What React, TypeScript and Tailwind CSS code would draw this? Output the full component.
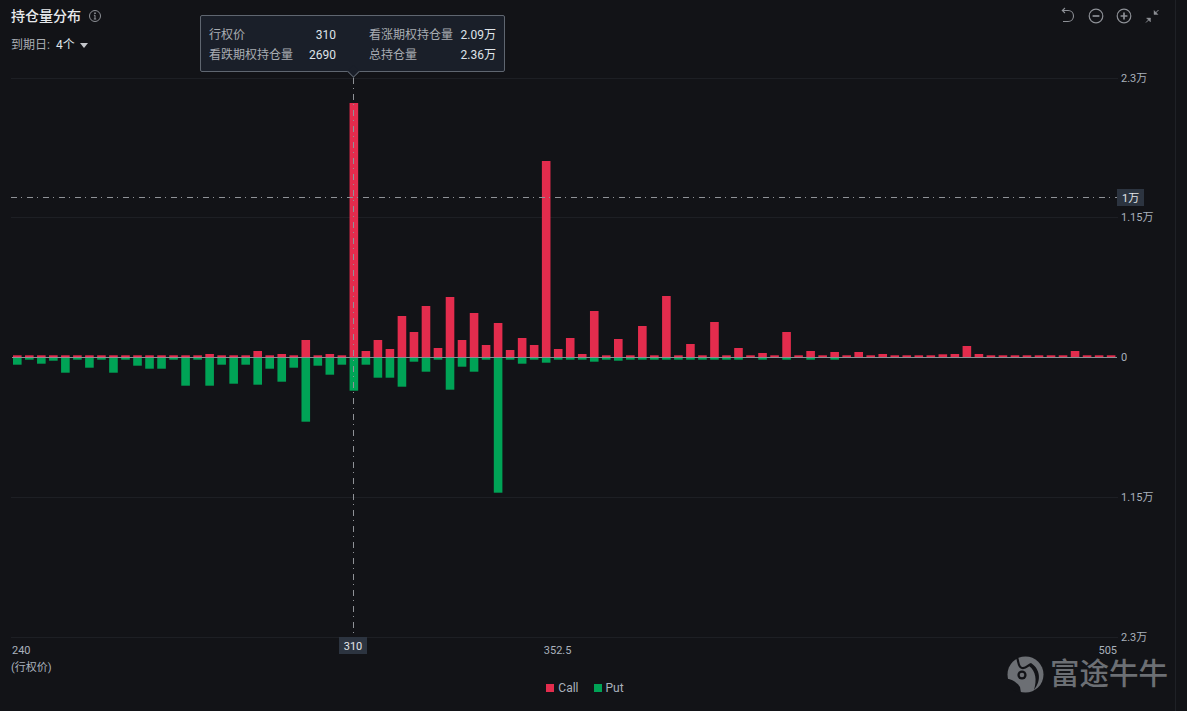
const calls = [
  1.7, 1.7, 1.7, 1.7, 1.7, 1.7, 1.7, 1.7, 1.7, 1.7, 1.7, 1.7, 1.7, 1.7, 1.7, 1.7, 3, 1.7, 1.7, 1.7, 6, 1.7, 3, 1.7,
  17, 1.7, 3, 1.7, 254, 6, 17, 8, 41, 25, 51, 9, 60, 17, 44, 12, 34, 7, 19, 12, 196, 8, 19, 3,
  46, 1.7, 18, 1.7, 31, 1.7, 61, 1.7, 13, 1.7, 35, 1.7, 9, 1.7, 4, 1.7, 25, 1.7, 6, 1.7, 5, 1.7, 5, 1.7,
  3, 1.7, 1.7, 1.7, 1.7, 2.7, 3, 11, 3, 1.7, 1.7, 1.7, 1.7, 1.7, 1.7, 1.7, 6, 1.7, 1.7, 1.7,
]

const puts = [
  7, 2, 6, 3, 15, 2, 10, 2, 15, 2, 8, 11, 11, 2, 28, 2, 28, 7, 26, 7, 27, 11, 24, 10,
  64, 8, 17, 7, 33, 7, 20, 20, 29, 4, 14, 2, 32, 9, 14, 2, 135, 2, 6, 2, 5, 2, 2, 2,
  4, 2, 3, 2, 2, 2, 2, 2, 2, 2, 2, 2, 2, 0, 2, 0, 2, 0, 2, 0, 2, 0, 0, 0,
  0, 0, 0, 0, 0, 0, 0, 0, 0, 0, 0, 0, 0, 0, 0, 0, 0, 0, 0, 0,
]

const grid = [78, 217, 497, 637]
const yLabels = [
  { y: 82, text: '2.3万' },
  { y: 221, text: '1.15万' },
  { y: 361, text: '0' },
  { y: 501, text: '1.15万' },
  { y: 641, text: '2.3万' },
]

function Chart() {
  return (
    <svg width="1175" height="619" viewBox="0 60 1175 619" className="block">
      {grid.map(y => (
        <rect key={y} x="11" y={y} width="1107" height="1" fill="#1d1f24" />
      ))}

      {calls.map((h, i) => (
        <rect key={i} x={13 + i * 12.02} y={357 - h} width="8.6" height={h} fill="#e32c4d" />
      ))}
      {puts.map((h, i) =>
        h > 0 ? <rect key={i} x={13 + i * 12.02} y="358" width="8.6" height={h - 0.3} fill="#00a356" /> : null,
      )}
      <rect x="12" y="357" width="1105" height="1" fill="#8b8e94" />

      <line x1="11" y1="197.5" x2="1117" y2="197.5" stroke="#8f9297" strokeDasharray="6 4 1 5" />
      <line x1="353.5" y1="78" x2="353.5" y2="637" stroke="#8f9297" strokeDasharray="6 4 1 5" />

      {yLabels.map(l => (
        <text key={l.y} x="1121" y={l.y} fontSize="11" fill="#a9b1bc">
          {l.text}
        </text>
      ))}

      <rect x="1117" y="189" width="27" height="17" fill="#2c3440" />
      <text x="1122" y="202" fontSize="11" fill="#e2e5e9">
        1万
      </text>

      <rect x="339" y="637" width="28" height="17" fill="#2c3440" />
      <text x="353" y="650" fontSize="11" fill="#e2e5e9" textAnchor="middle">
        310
      </text>

      <text x="12" y="654" fontSize="11" fill="#a9b1bc">
        240
      </text>
      <text x="11" y="671" fontSize="11" fill="#a9b1bc">
        (行权价)
      </text>
      <text x="557.6" y="654" fontSize="11" fill="#a9b1bc" textAnchor="middle">
        352.5
      </text>
      <text x="1117" y="654" fontSize="11" fill="#a9b1bc" textAnchor="end">
        505
      </text>
    </svg>
  )
}

function Tooltip() {
  return (
    <div className="absolute left-[200px] top-[15px] w-[305px] h-[57px] rounded-[2px] border border-[#5f6670] bg-[#1a1f29] px-[8px] text-[12px] leading-[20px] text-[#a9adb3]">
      <div className="grid grid-cols-[127px_160px] mt-[9px]">
        <div className="flex justify-between">
          <span>行权价</span>
          <span className="text-[#dfe3e8]">310</span>
        </div>
        <div className="flex justify-between pl-[33px]">
          <span>看涨期权持仓量</span>
          <span className="text-[#dfe3e8]">2.09万</span>
        </div>
        <div className="flex justify-between">
          <span>看跌期权持仓量</span>
          <span className="text-[#dfe3e8]">2690</span>
        </div>
        <div className="flex justify-between pl-[33px]">
          <span>总持仓量</span>
          <span className="text-[#dfe3e8]">2.36万</span>
        </div>
      </div>
      <div className="absolute left-[148px] top-[51px] w-[9px] h-[9px] rotate-45 border-r border-b border-[#5f6670] bg-[#1a1f29]" />
    </div>
  )
}

function Toolbar() {
  return (
    <div className="flex items-center gap-[8px] mr-[13px] text-[#8d9096]">
      <svg width="20" height="20" viewBox="0 0 20 20" fill="none" stroke="currentColor" strokeWidth="1.1">
        <path d="M4.5 4.5H10C13.2 4.5 15.5 6.8 15.5 10C15.5 13.2 13.2 15.5 10 15.5H5" />
        <path d="M7 2L4.3 4.5L7 7" />
      </svg>
      <svg width="20" height="20" viewBox="0 0 20 20" fill="none" stroke="currentColor" strokeWidth="1.2">
        <circle cx="10" cy="10" r="6.8" />
        <path d="M6.6 10H13.4" strokeWidth="1.7" />
      </svg>
      <svg width="20" height="20" viewBox="0 0 20 20" fill="none" stroke="currentColor" strokeWidth="1.2">
        <circle cx="10" cy="10" r="6.8" />
        <path d="M6.6 10H13.4M10 6.6V13.4" strokeWidth="1.7" />
      </svg>
      <svg width="20" height="20" viewBox="0 0 20 20" fill="currentColor" stroke="currentColor" strokeWidth="1">
        <path d="M16.5 4L12.5 8" fill="none" />
        <path d="M12 4.5V8.5H16Z" strokeWidth="0.4" />
        <path d="M4 16.5L8 12.5" fill="none" />
        <path d="M4.5 12H8.5V16Z" strokeWidth="0.4" />
      </svg>
    </div>
  )
}

function Watermark() {
  return (
    <div className="absolute left-[1007px] top-[656px] flex items-center gap-[6px] text-[#6c6f74]">
      <svg width="37" height="37" viewBox="0 0 37 37">
        <circle cx="18.5" cy="18.5" r="18" fill="#6c6f74" />
        <path d="M10 1C12 7 11 11 15 12C19 13 21 9 24 8" fill="none" stroke="#121317" strokeWidth="2.2" />
        <path d="M24 7C33 13 35 24 27 34C30 24 29 15 22 10Z" fill="#121317" />
        <path d="M0 23C6 23 10 27 13 31L14 37L6 34L0 28Z" fill="#121317" />
        <circle cx="15" cy="19" r="4.6" fill="#121317" />
        <circle cx="15" cy="19" r="2.3" fill="#6c6f74" />
      </svg>
      <span className="text-[29.5px] leading-[37px] font-medium">富途牛牛</span>
    </div>
  )
}

export default function App() {
  return (
    <div className="relative w-[1187px] h-[711px] overflow-hidden bg-[#121317] font-['Roboto','Noto_Sans_CJK_SC',sans-serif]">
      <div className="w-[1176px] h-full border-r border-[#1f2126] flex flex-col">
        <div className="h-[60px] pl-[11px] pt-[6px]">
          <div className="flex items-center justify-between h-[20px]">
            <div className="flex items-center gap-[7px]">
              <span className="text-[14px] font-medium text-[#e8eaed]">持仓量分布</span>
              <svg width="14" height="14" viewBox="0 0 14 14" fill="none" stroke="#8d9096">
                <circle cx="7" cy="7" r="5.5" />
                <path d="M7 6.2V10M5.8 10H8.2M5.9 6.3H7" />
                <circle cx="7" cy="4.2" r="0.5" fill="#8d9096" />
              </svg>
            </div>
            <Toolbar />
          </div>
          <div className="flex items-center mt-[10px] text-[12px] text-[#a9adb3]">
            <span>到期日:</span>
            <span className="ml-[6px] text-[#dfe3e8]">4个</span>
            <span className="ml-[5px] w-0 h-0 border-x-[4px] border-x-transparent border-t-[5px] border-t-[#c4c7cb]" />
          </div>
        </div>
        <Chart />
        <div className="flex items-center justify-center gap-[15px] pr-[5px] text-[12px] text-[#a9b1bc]">
          <div className="flex items-center gap-[4px]">
            <span className="w-[8px] h-[8px] bg-[#e32c4d]" />
            <span>Call</span>
          </div>
          <div className="flex items-center gap-[4px]">
            <span className="w-[8px] h-[8px] bg-[#00a356]" />
            <span>Put</span>
          </div>
        </div>
      </div>
      <Tooltip />
      <Watermark />
    </div>
  )
}
